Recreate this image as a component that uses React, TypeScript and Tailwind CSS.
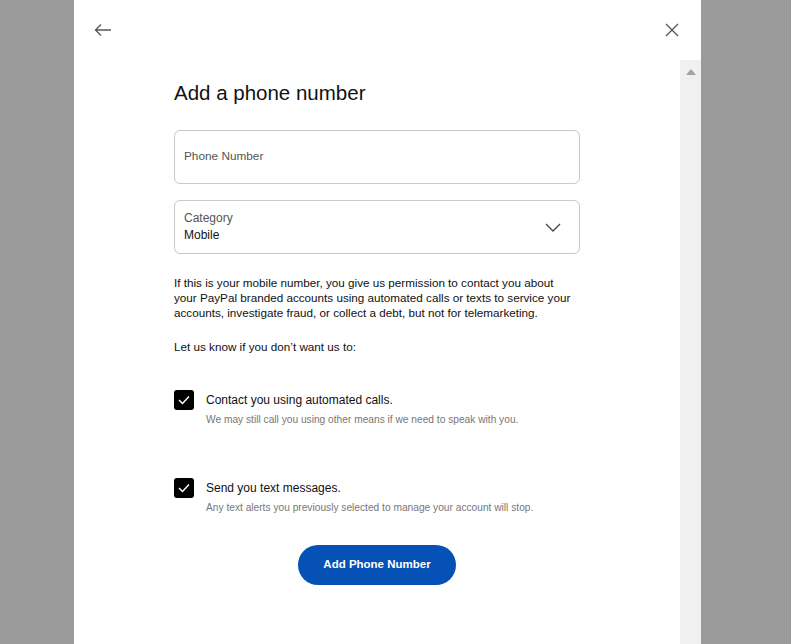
import React from "react";

export default function App() {
  return (
    <div className="w-[791px] h-[644px] bg-[#9b9b9b] flex justify-center overflow-hidden" style={{ fontFamily: "'Liberation Sans', Arial, sans-serif" }}>
      <div className="ml-[-16px] w-[627px] h-full bg-white flex flex-col">
        <div className="h-[60px] flex items-center justify-between pl-[20px] pr-[22px] shrink-0">
          <svg width="18" height="14" viewBox="0 0 18 14" fill="none" stroke="#555" strokeWidth="1.3">
            <path d="M17 7H2M7 1.5L1.5 7L7 12.5" />
          </svg>
          <svg width="14" height="14" viewBox="0 0 14 14" fill="none" stroke="#555" strokeWidth="1.3">
            <path d="M1 1L13 13M13 1L1 13" />
          </svg>
        </div>
        <div className="flex flex-1 min-h-0">
          <div className="flex-1 pl-[100px] pr-[100px]">
            <h1 className="text-[20.5px] leading-[28px] text-[#111] mt-[19px]">Add a phone number</h1>
            <div className="mt-[23px] h-[54px] border border-[#c9c9cf] rounded-[6px] flex items-center px-[9px]">
              <span className="text-[11.8px] text-[#555]">Phone Number</span>
            </div>
            <div className="mt-[16px] h-[54px] border border-[#c9c9cf] rounded-[6px] flex items-center justify-between pl-[9px] pr-[18px]">
              <div className="flex flex-col">
                <span className="text-[12px] leading-[16px] text-[#555]">Category</span>
                <span className="text-[12px] leading-[18px] text-[#111]">Mobile</span>
              </div>
              <svg width="16" height="9" viewBox="0 0 16 9" fill="none" stroke="#444" strokeWidth="1.3">
                <path d="M1 1L8 8L15 1" />
              </svg>
            </div>
            <p className="mt-[21px] pr-[5px] text-[11.7px] leading-[15px] text-[#111]">
              If this is your mobile number, you give us permission to contact you about your PayPal branded accounts using automated calls or texts to service your accounts, investigate fraud, or collect a debt, but not for telemarketing.
            </p>
            <p className="mt-[19px] text-[11.7px] leading-[15px] text-[#111]">Let us know if you don’t want us to:</p>
            <div className="mt-[36px] flex gap-[12px]">
              <Check />
              <div className="flex flex-col">
                <span className="text-[12px] leading-[20px] text-[#111]">Contact you using automated calls.</span>
                <span className="text-[10.2px] leading-[20px] text-[#777]">We may still call you using other means if we need to speak with you.</span>
              </div>
            </div>
            <div className="mt-[48px] flex gap-[12px]">
              <Check />
              <div className="flex flex-col">
                <span className="text-[12px] leading-[20px] text-[#111]">Send you text messages.</span>
                <span className="text-[10.2px] leading-[20px] text-[#777]">Any text alerts you previously selected to manage your account will stop.</span>
              </div>
            </div>
            <div className="flex justify-center mt-[27px]">
              <button className="w-[158px] h-[40px] rounded-full bg-[#0551b5] text-white text-[11.5px] font-bold">Add Phone Number</button>
            </div>
          </div>
          <div className="w-[21px] bg-[#f0f0f0] flex justify-center pt-[9px] shrink-0">
            <svg width="10" height="6" viewBox="0 0 10 6"><path d="M0 6L5 0L10 6Z" fill="#a3a3a3" /></svg>
          </div>
        </div>
      </div>
    </div>
  );
}

function Check() {
  return (
    <div className="w-[20px] h-[20px] bg-black rounded-[3px] flex items-center justify-center shrink-0">
      <svg width="12" height="10" viewBox="0 0 12 10" fill="none" stroke="white" strokeWidth="1.5">
        <path d="M1 5L4.5 8.5L11 1.5" />
      </svg>
    </div>
  );
}
